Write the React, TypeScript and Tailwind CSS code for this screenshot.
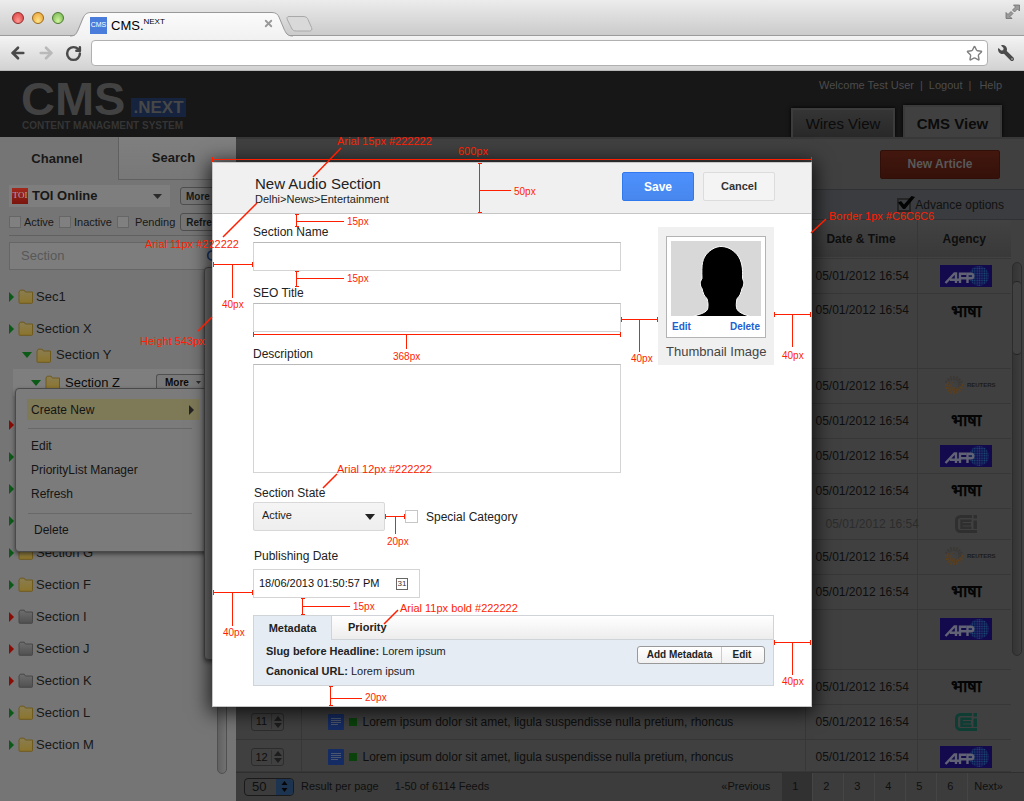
import React from "react";
import { ArrowLeft, ArrowRight, RotateCw, Search, Star, X } from "lucide-react";
import { FaWrench } from "react-icons/fa";

/* ---------- small drawings ---------- */

function Folder({ grey = false }: { grey?: boolean }) {
  const id = grey ? "folder-grey" : "folder-yellow";
  return (
    <svg width="16" height="15" viewBox="0 0 16 15" className="shrink-0" aria-hidden="true">
      <defs>
        <linearGradient id={id} x1="0" y1="0" x2="0" y2="1">
          <stop offset="0" stopColor={grey ? "#6e6e6e" : "#8a7d52"} />
          <stop offset="1" stopColor={grey ? "#505050" : "#8b742c"} />
        </linearGradient>
      </defs>
      <path
        d="M1 13.5V3L2.2 1.2h4L7.4 3h7.1v10.5a.8.8 0 0 1-.8.8H1.8a.8.8 0 0 1-.8-.8Z"
        fill={`url(#${id})`}
        stroke={grey ? "#484848" : "#6f5a1e"}
      />
    </svg>
  );
}

function Triangle({ down = false, red = false }: { down?: boolean; red?: boolean }) {
  const fill = red ? "#8c0a04" : "#0b5a17";
  return down ? (
    <svg width="10" height="6" viewBox="0 0 10 6" className="shrink-0" aria-hidden="true">
      <path d="M0 0h10L5 6Z" fill={fill} />
    </svg>
  ) : (
    <svg width="5" height="10" viewBox="0 0 5 10" className="shrink-0" aria-hidden="true">
      <path d="M0 0v10l5-5Z" fill={fill} />
    </svg>
  );
}

function Afp() {
  return (
    <svg width="52" height="22" viewBox="0 0 52 22" className="inline-block" role="img" aria-label="AFP">
      <defs>
        <pattern id="afp-dots" width="2.4" height="2.4" patternUnits="userSpaceOnUse">
          <rect width="2.4" height="2.4" fill="#120e50" />
          <circle cx="1.2" cy="1.2" r="0.8" fill="#1d5078" />
        </pattern>
      </defs>
      <rect width="52" height="22" fill="#120a4c" />
      <circle cx="39" cy="11" r="10" fill="url(#afp-dots)" />
      <g fill="none" stroke="#626275" strokeWidth="2.4">
        <path d="M5.500 18 14.500 8.500h1.500v9.500M10 14.800h10.500" />
        <path d="M20 18V8.700h6.500M19 13.200h6" />
        <path d="M27.500 18V8.700h3.500a2.200 2.200 0 0 1 0 4.600h-6" />
      </g>
    </svg>
  );
}

function Cei({ faded = false }: { faded?: boolean }) {
  const c = faded ? "#2f2f2f" : "#0d3d33";
  return (
    <svg width="22" height="18" viewBox="0 0 22 18" className="inline-block" role="img" aria-label="CEI">
      <path d="M22 16.500H5.500a4 4 0 0 1-4-4v-7a4 4 0 0 1 4-4H17" fill="none" stroke={c} strokeWidth="3" />
      <path d="M16.500 5.700H6.500v7h10M7 9.200h9" fill="none" stroke={c} strokeWidth="2.400" />
      <path d="M18.500 5.500H22V14h-3.500zM18.500 0H22v3.500h-3.500z" fill={c} />
    </svg>
  );
}

function Reuters() {
  const dots = [];
  for (let ring = 0; ring < 4; ring++) {
    for (let i = 0; i < 16; i++) {
      const a = (i / 16) * Math.PI * 2 + ring * 0.35;
      const r = 8.2 - ring * 1.7;
      dots.push(
        <circle
          key={`${ring}-${i}`}
          cx={9 + Math.cos(a) * r}
          cy={9 + Math.sin(a) * r}
          r={1.05 - ring * 0.12}
          fill={i > 8 ? "#3c3834" : "#5c3f1c"}
        />
      );
    }
  }
  return (
    <span className="inline-flex items-center gap-1 pl-2 text-[6px] font-bold text-[#1c1c1c]">
      <svg width="18" height="18" viewBox="0 0 18 18" aria-hidden="true">
        {dots}
        <path d="M5 8c0-3 4-4 6-2 2 1 2 4 0 5" fill="none" stroke="#404040" strokeWidth="2" />
      </svg>
      REUTERS
    </span>
  );
}

function Bhasha() {
  return <span className="text-[17px] leading-5 font-bold text-[#050505]">भाषा</span>;
}

/* ---------- browser frame ---------- */

function BrowserChrome() {
  return (
    <div>
      <div className="relative flex h-9 items-center border-b border-[#9b9b9b] bg-linear-to-b from-[#ececec] to-[#cbcbcb]">
        <div className="flex gap-2 pl-3">
          <span className="h-3 w-3 rounded-full border border-[#8e2f2c] bg-radial-[at_50%_80%] from-[#ff9a92] to-[#d8363c]" />
          <span className="h-3 w-3 rounded-full border border-[#9a6a1c] bg-radial-[at_50%_80%] from-[#ffe58a] to-[#e89a2c]" />
          <span className="h-3 w-3 rounded-full border border-[#4c7a30] bg-radial-[at_50%_80%] from-[#d3f5a0] to-[#6bb04a]" />
        </div>
        <svg width="245" height="25" viewBox="0 0 245 25" className="absolute top-3 left-[70px]" aria-hidden="true">
          <defs>
            <linearGradient id="tab-fill" x1="0" y1="0" x2="0" y2="1">
              <stop offset="0" stopColor="#fbfbfb" />
              <stop offset="1" stopColor="#f2f2f2" />
            </linearGradient>
          </defs>
          <path d="M0 25v-1h3c4-1 4-3 6-7l5-12c1-3 3-4.500 7-4.500h181c4 0 6 2 7 4.500l5 12c2 4 3 6.500 8 7.500v.5z" fill="url(#tab-fill)" />
          <path d="M0 24c5 0 6-2 8-6l5-12c2-4 4-5.500 8-5.500h181c4 0 6 2 7 4.500l5 12c2 4 3 7 9 7" fill="none" stroke="#999" />
          <path d="M219 4.500h14c3 0 4 1 5 3l3.500 8c1 2 0 3.500-2 3.500h-13c-3 0-4-1-5-3l-4-8c-1-2-.5-3.500 1.500-3.500Z" fill="#d9d9d9" stroke="#a9a9a9" />
        </svg>
        <div className="relative ml-[26px] flex w-[184px] items-center pt-4">
          <span className="flex h-[17px] w-[17px] items-center justify-center bg-[#4a7ddb] text-[7px] text-white">CMS</span>
          <span className="ml-1 flex items-start text-[13px] leading-5 text-black">
            CMS.<span className="text-[8px] leading-3">NEXT</span>
          </span>
          <button aria-label="Close tab" className="mb-1 ml-auto text-[#999]">
            <X size={11} strokeWidth={4} />
          </button>
        </div>
        <svg width="16" height="16" viewBox="0 0 16 16" className="mr-[3px] mb-3 ml-auto" fill="#9a9a9a" stroke="#6e6e6e" strokeWidth="0.800" aria-hidden="true">
          <path d="M8.500 1h6v6l-2-2-3 3-2-2 3-3ZM1 8.500l2 2 3-3 2 2-3 3 2 2H1Z" />
        </svg>
      </div>
      <div className="flex h-[35px] items-center border-b border-[#b8b8b8] bg-linear-to-b from-[#f4f4f4] to-[#d2d2d2] pr-[10px] pl-[9px] text-[#4a4a4a]">
        <button aria-label="Back"><ArrowLeft size={18} strokeWidth={3.5} /></button>
        <button aria-label="Forward" className="ml-[10px] text-[#b9b9b9]"><ArrowRight size={18} strokeWidth={3.5} /></button>
        <button aria-label="Reload" className="mr-[9px] ml-[10px]"><RotateCw size={17} strokeWidth={3.5} /></button>
        <div className="flex h-[26px] flex-1 items-center rounded-[4px] border border-[#b0b0b0] bg-white pr-1">
          <input aria-label="Address" className="h-full min-w-0 flex-1 outline-none" />
          <Star size={17} strokeWidth={2} className="text-[#808080]" />
        </div>
        <button aria-label="Settings" className="ml-[10px] -scale-x-100"><FaWrench size={16} /></button>
      </div>
    </div>
  );
}

/* ---------- page header ---------- */

function Header() {
  return (
    <header className="flex h-[66px] justify-between bg-[#171717]">
      <div className="pl-[21px]">
        <div className="flex items-end pt-[7px]">
          <span className="text-[47px] leading-[42px] font-bold text-[#424242]">CMS</span>
          <span className="mb-[3px] ml-[6px] bg-[#15233f] px-[2px] text-[17px] leading-[19px] font-bold text-[#474747]">.NEXT</span>
        </div>
        <div className="pl-px text-[10px] leading-3 font-bold text-[#353535]">CONTENT MANAGMENT SYSTEM</div>
      </div>
      <div className="flex flex-col justify-between pr-[22px]">
        <nav className="flex justify-end gap-[6px] pt-[7px] text-[11px] leading-[14px] text-[#4c4c4c]">
          <span>Welcome Test User</span><span>|</span>
          <a href="#logout">Logout</a><span className="pr-[2px]">|</span>
          <a href="#help">Help</a>
        </nav>
        <div className="flex items-end gap-2 text-[15px] text-[#0b0b0b]">
          <button className="h-[29px] w-[104px] border-2 border-b-0 border-[#3c3c3c] bg-linear-to-b from-[#353535] to-[#282828] pt-[2px] shadow-[0_0_4px_#000]">
            Wires View
          </button>
          <button className="h-8 w-[99px] border-2 border-b-0 border-[#3a3a3a] bg-[#404040] pt-1 font-bold shadow-[0_0_4px_#000]">
            CMS View
          </button>
        </div>
      </div>
    </header>
  );
}

/* ---------- sidebar ---------- */

function DimCheck({ label, id, wide = false }: { label: string; id: string; wide?: boolean }) {
  return (
    <span className={`flex items-center ${wide ? "gap-[6px]" : "gap-[3px]"}`}>
      <input id={id} type="checkbox" className="h-3 w-3 appearance-none border border-[#666] bg-[#808080]" />
      <label htmlFor={id}>{label}</label>
    </span>
  );
}

type Node = { label?: string; red?: boolean };
const LOWER: Node[] = [
  { red: true }, {}, {}, {},
  { label: "Section G" }, { label: "Section F" },
  { label: "Section I", red: true }, { label: "Section J", red: true }, { label: "Section K", red: true },
  { label: "Section L" }, { label: "Section M" },
];

function ContextMenu() {
  return (
    <div className="absolute top-[19px] left-[2px] z-10 h-[164px] w-[210px] rounded-sm border border-[#4a4a4a] bg-[#7b7b7b] pt-[10px] text-xs text-[#141414] shadow-[0_2px_4px_rgba(0,0,0,0.5)]">
      <button className="ml-[11px] flex h-[21px] w-[172px] items-center justify-between bg-[#7e7a58] pr-[5px] pl-1">
        Create New
        <svg width="5" height="10" viewBox="0 0 5 10" aria-hidden="true"><path d="M0 0v10l5-5Z" fill="#222" /></svg>
      </button>
      <hr className="mt-2 mb-[5px] ml-3 w-[164px] border-[#686868]" />
      <div className="flex flex-col items-start pl-[15px]">
        <button className="h-6">Edit</button>
        <button className="h-6">PriorityList Manager</button>
        <button className="h-6">Refresh</button>
      </div>
      <hr className="mt-[7px] mb-1 ml-3 w-[164px] border-[#686868]" />
      <button className="ml-[18px] h-6">Delete</button>
    </div>
  );
}

function Sidebar() {
  return (
    <aside className="relative w-[236px] shrink-0 bg-[#757575] text-[#181818]">
      <div className="flex h-[43px] text-[13px] font-bold">
        <button className="w-1/2 pr-1">Channel</button>
        <button className="w-1/2 border-b border-l border-[#606060] bg-linear-to-b from-[#7f7f7f] to-[#787878] pr-2">Search</button>
      </div>
      <div className="flex items-center gap-[10px] pt-[5px] pl-[9px]">
        <button className="flex h-[22px] w-[161px] items-center bg-[#7e7e7e] pr-2 pl-[3px] text-[13px] font-bold">
          <span className="mr-1 flex h-4 w-4 items-center justify-center bg-linear-to-b from-[#a3281c] to-[#7a150e] font-[Liberation_Serif,serif] text-[9px] font-normal text-[#aaa]">TOI</span>
          TOI Online
          <svg width="9" height="5" viewBox="0 0 9 5" className="ml-auto" aria-hidden="true"><path d="M0 0h9L4.500 5Z" fill="#2a2a2a" /></svg>
        </button>
        <button className="h-[18px] flex-1 rounded-[3px] border border-[#4f4f4f] pl-[5px] text-left text-[10px] font-bold">More</button>
      </div>
      <div className="flex h-[26px] items-center gap-[5px] pt-1 pl-[9px] text-[11px]">
        <DimCheck id="f-active" label="Active" />
        <DimCheck id="f-inactive" label="Inactive" />
        <DimCheck id="f-pending" label="Pending" wide />
        <button className="h-[18px] flex-1 rounded-[3px] border border-[#4f4f4f] pl-[5px] text-left text-[10px] font-bold">Refresh</button>
      </div>
      <hr className="mt-[2px] ml-[9px] border-[#616161]" />
      <div className="mt-[6px] mr-[9px] ml-[9px] flex h-7 items-center border border-[#666] bg-[#7d7d7d] pr-[6px]">
        <input aria-label="Section" placeholder="Section" className="min-w-0 flex-1 pl-[11px] text-[13px] outline-none placeholder:text-[#585858]" />
        <Search size={14} strokeWidth={3} className="text-[#17396e]" />
      </div>
      <div className="mt-[11px] mr-[9px] flex">
        <ul className="min-w-0 flex-1 pb-[13px] text-[13px]">
          {["Sec1", "Section X"].map((name) => (
            <li key={name} className="flex h-8 items-center pl-[9px]">
              <Triangle />
              <span className="mr-[2px] ml-1 flex pb-[2px]"><Folder /></span>
              {name}
            </li>
          ))}
          <li className="mb-1 flex h-5 items-center gap-1 pl-[22px]">
            <Triangle down />
            <Folder />
            Section Y
          </li>
          <li className="relative mb-[13px] ml-[13px] flex h-[27px] items-center bg-[#7e7e7e] pl-[18px] text-[#0a0a0a]">
            <Triangle down />
            <span className="mx-1 flex"><Folder /></span>
            Section Z
            <button className="absolute top-[5px] left-[143px] flex h-4 w-14 items-center gap-[7px] rounded-t-[3px] border border-b-0 border-[#4f4f4f] bg-[#797979] pl-2 text-[10px] font-bold">
              More
              <svg width="5" height="3" viewBox="0 0 5 3" aria-hidden="true"><path d="M0 0h5L2.500 3Z" fill="#2a2a2a" /></svg>
            </button>
            <ContextMenu />
          </li>
          {LOWER.map((n, i) => (
            <li key={i} className="flex h-8 items-center pl-[9px]">
              <Triangle red={n.red} />
              {n.label && (
                <>
                  <span className="mr-[2px] ml-1 flex pb-[2px]"><Folder grey={n.red} /></span>
                  {n.label}
                </>
              )}
            </li>
          ))}
        </ul>
        <div className="w-[10px] rounded-full border border-[#505050] bg-linear-to-r from-[#616161] to-[#717171]" />
      </div>
      <div className="absolute top-[130px] left-[204px] z-20 h-[393px] w-8 rounded-sm border border-[#484848] bg-[#717171] shadow-[0_2px_4px_rgba(0,0,0,0.5)]" />
    </aside>
  );
}

/* ---------- feed table ---------- */

const STAMP = "05/01/2012 16:54";
type Row = { h: string; stamp?: boolean; agency: React.ReactNode; top?: boolean; faded?: boolean; no?: string };
const ROWS: Row[] = [
  { h: "h-[35px]", stamp: true, agency: <Afp /> },
  { h: "h-[75px]", stamp: true, agency: <Bhasha />, top: true },
  { h: "h-[35px]", stamp: true, agency: <Reuters /> },
  { h: "h-[35px]", stamp: true, agency: <Bhasha /> },
  { h: "h-[35px]", stamp: true, agency: <Afp /> },
  { h: "h-[35px]", stamp: true, agency: <Bhasha /> },
  { h: "h-[31px]", stamp: true, agency: <Cei faded />, faded: true },
  { h: "h-[35px]", stamp: true, agency: <Reuters /> },
  { h: "h-[35px]", stamp: true, agency: <Bhasha /> },
  { h: "h-[60px]", agency: <Afp />, top: true },
  { h: "h-[35px]", stamp: true, agency: <Bhasha /> },
  { h: "h-[35px]", stamp: true, agency: <Cei />, no: "11" },
  { h: "h-[32px]", stamp: true, agency: <Afp />, no: "12" },
];

function FeedTable() {
  return (
    <table className="w-full table-fixed border-collapse text-left text-xs text-[#0e0e0e]">
      <colgroup>
        <col className="w-[65px]" />
        <col />
        <col className="w-[112px]" />
        <col className="w-[94px]" />
      </colgroup>
      <thead>
        <tr className="h-[38px] border-b border-[#373737] bg-linear-to-b from-[#424242] to-[#393939]">
          <th className="border-r border-[#373737]" />
          <th className="border-r border-[#373737]" />
          <th className="border-r border-[#373737] text-center">Date &amp; Time</th>
          <th className="text-center">Agency</th>
        </tr>
      </thead>
      <tbody>
        {ROWS.map((r, i) => {
          const pad = r.top ? "pt-2 align-top" : i === ROWS.length - 1 ? "pt-1 align-middle" : "align-middle";
          return (
            <tr key={i} className={`${r.h} border-b border-[#373737]`}>
              <td className={`border-r border-[#373737] p-0 pl-[15px] ${pad}`}>
                {r.no && (
                  <span className="flex h-[18px] w-[33px] items-center rounded-[3px] border border-[#2c2c2c]">
                    <input aria-label={`Position ${r.no}`} defaultValue={r.no} className="w-5 border-r border-[#333] text-center text-[11px] outline-none" />
                    <svg width="8" height="12" viewBox="0 0 8 12" className="ml-[2px]" fill="#1d1d1d" aria-hidden="true">
                      <path d="M0 5h8L4 0ZM0 7h8l-4 5Z" />
                    </svg>
                  </span>
                )}
              </td>
              <td className={`border-r border-[#373737] p-0 pl-[26px] ${pad}`}>
                {r.no && (
                  <span className="flex items-center whitespace-nowrap">
                    <svg width="16" height="16" viewBox="0 0 16 16" aria-hidden="true">
                      <rect width="16" height="16" rx="1" fill="#152b63" />
                      <path d="M3 4.500h10M3 6.500h10M3 8.500h10M3 10.500h7" stroke="#4c566e" />
                    </svg>
                    <span className="mr-[6px] ml-[5px] h-2 w-2 bg-[#0b410b]" />
                    Lorem ipsum dolor sit amet, ligula suspendisse nulla pretium, rhoncus
                  </span>
                )}
              </td>
              <td
                className={`border-r border-[#373737] p-0 whitespace-nowrap ${pad} ${
                  r.faded ? "pl-5 text-[#2c2c2c]" : "pl-[10px]"
                }`}
              >
                {r.stamp && STAMP}
              </td>
              <td className={`p-0 pl-1 text-center leading-none ${pad}`}>{r.agency}</td>
            </tr>
          );
        })}
      </tbody>
    </table>
  );
}

function Main() {
  return (
    <main className="flex min-w-0 flex-1 flex-col bg-[#404040]">
      <div className="flex h-[52px] items-start justify-end border-t-2 border-[#383838] pt-[11px] pr-6">
        <button className="h-[29px] w-[120px] rounded-[2px] border border-[#300f09] bg-linear-to-b from-[#42170e] to-[#35110a] pb-[2px] text-xs font-bold text-[#595959]">
          New Article
        </button>
      </div>
      <div className="flex h-[31px] items-center justify-end gap-1 border-y border-[#303134] bg-[#3a3c3f] pr-5 text-xs text-[#111]">
        <span className="relative flex">
          <input id="advance" type="checkbox" defaultChecked className="h-[14px] w-[14px] appearance-none border-2 border-[#252525]" />
          <svg width="18" height="14" viewBox="0 0 18 14" className="pointer-events-none absolute bottom-[2px] left-0" aria-hidden="true">
            <path d="M1 6.500 4 5l3 3.500L14.500 0 18 1 8 13H6Z" fill="#030303" />
          </svg>
        </span>
        <label htmlFor="advance">Advance options</label>
      </div>
      <div className="flex">
        <div className="min-w-0 flex-1"><FeedTable /></div>
        <div className="flex w-[13px] flex-col pt-[42px]">
          <div className="ml-px h-[394px] w-[10px] rounded-full border border-[#2c2c2c] bg-linear-to-r from-[#343434] to-[#3d3d3d] pt-[18px]">
            <div className="h-[74px] rounded-full border-y border-[#242424] bg-[#414141]" />
          </div>
        </div>
      </div>
      <footer className="flex h-[30px] items-center border-t border-[#2f2f2f] bg-[#3c3c3c] pr-[21px] pb-px pl-2 text-[11px] text-[#0f0f0f]">
        <span className="relative flex h-[18px] w-[50px] items-center overflow-hidden rounded-[4px] border border-[#1a1a1a]">
          <select aria-label="Results per page" className="h-full w-full appearance-none pl-[7px] text-[13px] leading-4 outline-none">
            <option>50</option>
          </select>
          <svg width="17" height="16" viewBox="0 0 17 16" className="pointer-events-none absolute right-0" aria-hidden="true">
            <rect width="17" height="16" fill="#1d3450" />
            <path d="M5.500 6h6l-3-4ZM5.500 9h6l-3 4Z" fill="#060606" />
          </svg>
        </span>
        <span className="ml-[7px]">Result per page</span>
        <span className="ml-4">1-50 of 6114 Feeds</span>
        <nav className="ml-auto flex h-full items-center">
          <a href="#previous" className="mr-3">«Previous</a>
          {["1", "2", "3", "4", "5", "6"].map((p) => (
            <a
              key={p}
              href={`#page-${p}`}
              className={`flex h-full w-[31px] items-center justify-center border-r border-[#454545] pr-1 ${p === "1" ? "bg-[#313131]" : ""}`}
            >
              {p}
            </a>
          ))}
          <a href="#next" className="pl-[6px]">Next»</a>
        </nav>
      </footer>
    </main>
  );
}

/* ---------- dialog ---------- */

function Thumbnail() {
  return (
    <div className="mt-[5px] h-[138px] w-[116px] bg-[#f0f0f0] px-2 pt-[9px]">
      <div className="h-[102px] border border-[#b3b3b3] bg-white px-1 pt-1">
        <svg width="90" height="75" viewBox="0 0 90 75" aria-hidden="true">
          <rect width="90" height="75" fill="#d8d8d8" />
          <path
            d="M22 75.500c5-2 12-3 14.500-7 1-4 .5-7-.5-11-3-2-4-6-5-10-2-3-2.500-6 0-10-.5-14 0-20 6-26 4-4 9-6 13-6 5 0 11 2 16 8 5 6 6 14 5.500 24 2 4 1.500 7-.5 10-1 4-2 8-5 10-1 5-1 8 0 11 3 4 8 5 13 7Z"
            fill="#000"
            stroke="#fff"
          />
        </svg>
        <div className="flex justify-between px-[1px] pt-1 text-[10px] leading-[14px] font-bold text-[#1d5fd0]">
          <a href="#edit-image">Edit</a>
          <a href="#delete-image">Delete</a>
        </div>
      </div>
      <div className="pt-1 text-[13px] leading-5 whitespace-nowrap text-[#444]">Thumbnail Image</div>
    </div>
  );
}

const FIELD = "block w-full border border-[#d4d4d4] border-t-[#b9b9b9] px-2 text-xs outline-none";

function Dialog() {
  return (
    <section role="dialog" aria-label="New Audio Section" className="border border-[#c6c6c6] bg-white text-xs text-[#222] shadow-[0_3px_18px_3px_rgba(0,0,0,0.75)]">
      <div className="flex h-[51px] items-start border-b border-[#c6c6c6] bg-[#f0f0f0] pt-[9px] pr-9 pl-[42px]">
        <div className="pt-[3px]">
          <h1 className="text-[15px] leading-[18px]">New Audio Section</h1>
          <div className="text-[11px] leading-3">Delhi&gt;News&gt;Entertainment</div>
        </div>
        <button className="ml-auto h-[29px] w-[72px] rounded-[2px] border border-[#3079ed] bg-linear-to-b from-[#4d90fe] to-[#4787ed] text-xs font-bold text-white">
          Save
        </button>
        <button className="ml-[9px] h-[29px] w-[72px] rounded-[2px] border border-[#dcdcdc] bg-[#f4f4f4] text-[11px] font-bold text-[#333]">
          Cancel
        </button>
      </div>
      <div className="pt-2 pr-[37px] pb-5 pl-10">
        <div className="flex items-start justify-between">
          <div className="flex w-[368px] flex-col gap-3">
            <div>
              <label htmlFor="name" className="block leading-5">Section Name</label>
              <input id="name" className={`${FIELD} h-[29px]`} />
            </div>
            <div>
              <label htmlFor="seo" className="block leading-5">SEO Title</label>
              <input id="seo" className={`${FIELD} h-[29px]`} />
            </div>
            <div>
              <label htmlFor="description" className="block leading-5">Description</label>
              <textarea id="description" className={`${FIELD} h-[109px] resize-none`} />
            </div>
          </div>
          <Thumbnail />
        </div>
        <label htmlFor="state" className="mt-3 mb-px block pl-[1px] leading-4">Section State</label>
        <div className="flex items-center">
          <span className="relative flex items-center">
            <select id="state" className="h-[29px] w-[132px] appearance-none rounded-[2px] border border-[#d8d8d8] bg-linear-to-b from-[#f5f5f5] to-[#eeeeee] pb-[2px] pl-2 text-[11px] outline-none">
              <option>Active</option>
            </select>
            <svg width="10" height="6" viewBox="0 0 10 6" className="pointer-events-none absolute right-[10px]" aria-hidden="true">
              <path d="M0 0h10L5 6Z" fill="#222" />
            </svg>
          </span>
          <input id="special" type="checkbox" className="ml-5 h-[13px] w-[13px] appearance-none border border-[#c6c6c6]" />
          <label htmlFor="special" className="ml-2">Special Category</label>
        </div>
        <label htmlFor="date" className="mt-[17px] mb-[5px] block pl-[1px] leading-4">Publishing Date</label>
        <div className="flex h-[29px] w-[167px] items-center border border-[#d4d4d4] pr-[11px]">
          <input id="date" defaultValue="18/06/2013 01:50:57 PM" className="min-w-0 flex-1 pl-[5px] text-[11px] text-[#111] outline-none" />
          <button aria-label="Open calendar" className="flex h-3 w-3 items-center justify-center border border-[#666] text-[8px] leading-none text-[#333]">
            31
          </button>
        </div>
        <div className="mt-[17px] h-[71px] border border-[#d0d4d8] bg-[#e5ecf4] text-[11px]">
          <div className="flex h-6 font-bold">
            <button className="w-[77px]">Metadata</button>
            <div className="flex-1 border-b border-l border-[#d0d4d8] bg-linear-to-b from-white to-[#ededed] pl-4">
              <button className="h-full">Priority</button>
            </div>
          </div>
          <div className="flex items-start justify-between pt-[1px] pr-2 pl-3 leading-5">
            <div>
              <div><b>Slug before Headline:</b> Lorem ipsum</div>
              <div><b>Canonical URL:</b> Lorem ipsum</div>
            </div>
            <div className="mt-[5px] flex h-[18px] rounded-[3px] border border-[#999] bg-linear-to-b from-white to-[#f1f1f1] text-[10px] leading-4 font-bold">
              <button className="w-[84px] border-r border-[#ccc]">Add Metadata</button>
              <button className="w-[42px] pr-[2px]">Edit</button>
            </div>
          </div>
        </div>
      </div>
    </section>
  );
}

/* ---------- measurement callouts ---------- */

const NOTES: { text: string; at: string; big?: boolean }[] = [
  { text: "Arial 15px #222222", at: "left-[337px] top-[135px]", big: true },
  { text: "600px", at: "left-[458px] top-[145px]", big: true },
  { text: "50px", at: "left-[514px] top-[186px]" },
  { text: "Arial 11px #222222", at: "left-[145px] top-[238px]", big: true },
  { text: "15px", at: "left-[347px] top-[216px]" },
  { text: "15px", at: "left-[347px] top-[273px]" },
  { text: "40px", at: "left-[222px] top-[299px]" },
  { text: "Height 543px", at: "left-[140px] top-[335px]", big: true },
  { text: "368px", at: "left-[393px] top-[351px]" },
  { text: "40px", at: "left-[631px] top-[353px]" },
  { text: "40px", at: "left-[782px] top-[350px]" },
  { text: "Border 1px #C6C6C6", at: "left-[829px] top-[210px]", big: true },
  { text: "Arial 12px #222222", at: "left-[337px] top-[463px]", big: true },
  { text: "20px", at: "left-[387px] top-[536px]" },
  { text: "40px", at: "left-[223px] top-[627px]" },
  { text: "15px", at: "left-[353px] top-[601px]" },
  { text: "Arial 11px bold #222222", at: "left-[400px] top-[602px]", big: true },
  { text: "20px", at: "left-[365px] top-[692px]" },
  { text: "40px", at: "left-[782px] top-[676px]" },
];

/* horizontal rulers: x1, x2, y, stem x, stem end y */
const H_RULES = [
  [212, 812, 159, 0, 0],
  [213, 253, 264, 232, 298],
  [253, 621, 334, 406, 349],
  [621, 658, 319, 639, 352],
  [774, 811, 314, 792, 347],
  [385, 405, 516, 395, 534],
  [213, 253, 592, 232, 626],
  [774, 811, 642, 792, 675],
];

/* vertical rulers: y1, y2, x, stem y, stem end x */
const V_RULES = [
  [163, 213, 479, 190, 511],
  [214, 227, 296, 221, 344],
  [271, 287, 296, 278, 344],
  [598, 615, 302, 606, 350],
  [686, 706, 330, 698, 362],
];

function Callouts() {
  const h = H_RULES.map(
    ([a, b, y, sx, sy]) =>
      `M${a} ${y + 0.5}H${b}M${a + 0.5} ${y - 2}v5M${b - 0.5} ${y - 2}v5` + (sx ? `M${sx + 0.5} ${y}V${sy}` : "")
  );
  const v = V_RULES.map(
    ([a, b, x, sy, sx]) => `M${x + 0.5} ${a}V${b}M${x - 1} ${a + 0.5}h4M${x - 1} ${b - 0.5}h4M${x} ${sy + 0.5}H${sx}`
  );
  return (
    <div className="pointer-events-none absolute -top-[162px] -left-[212px] h-[801px] w-[1024px] text-[#ff1e00]">
      <svg width="1024" height="801" fill="none" stroke="#ff1e00" aria-hidden="true">
        <path d={h.join("") + v.join("")} />
        <path
          strokeWidth="1.500"
          d="M341 148 313 177M257 203 223 237M212 317 198 331M826 219 811 233M337 474 323 488M398 610 384 624"
        />
      </svg>
      {NOTES.map((n) => (
        <span key={n.at} className={`absolute leading-3 whitespace-nowrap ${n.big ? "text-[11px]" : "text-[10px]"} ${n.at}`}>
          {n.text}
        </span>
      ))}
    </div>
  );
}

export default function App() {
  return (
    <div className="relative flex min-h-screen flex-col overflow-hidden font-['Liberation_Sans',Arial,sans-serif]">
      <BrowserChrome />
      <Header />
      <div className="flex flex-1">
        <Sidebar />
        <Main />
      </div>
      <div className="absolute inset-x-0 top-[162px] z-30 flex justify-center">
        <div className="relative w-[600px]">
          <Dialog />
          <Callouts />
        </div>
      </div>
    </div>
  );
}
